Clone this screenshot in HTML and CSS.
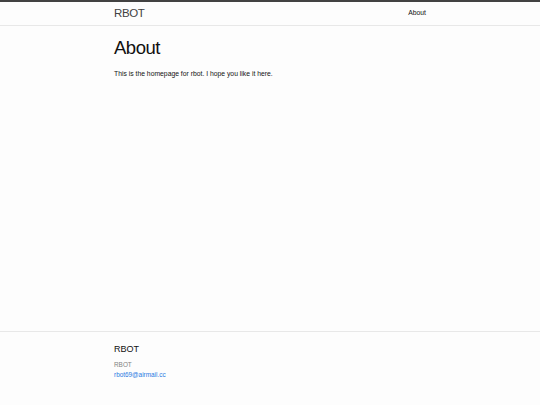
FILE: index.html
```html
<!DOCTYPE html>
<html lang="en">
<head>
<meta charset="utf-8">
<title>About | RBOT</title>
<link rel="stylesheet" href="styles.css">
</head>
<body>
<header class="site-header">
  <div class="wrapper header-row">
    <a class="site-title" href="#">RBOT</a>
    <nav class="site-nav"><a class="page-link" href="#">About</a></nav>
  </div>
</header>
<main class="page-content">
  <div class="wrapper">
    <h1 class="post-title">About</h1>
    <p class="intro">This is the homepage for rbot. I hope you like it here.</p>
  </div>
</main>
<footer class="site-footer">
  <div class="wrapper">
    <h2 class="footer-heading">RBOT</h2>
    <ul class="contact-list">
      <li class="muted">RBOT</li>
      <li><a href="#">rbot69@airmail.cc</a></li>
    </ul>
  </div>
</footer>
</body>
</html>
```

FILE: styles.css
```css
html, body {
  margin: 0;
  padding: 0;
}
body {
  background: #fdfdfd;
  color: #111;
  font-family: "Liberation Sans", Arial, Helvetica, sans-serif;
  font-size: 6.8px;
  line-height: 1.5;
  min-height: 100vh;
  display: flex;
  flex-direction: column;
}
.wrapper {
  width: 312px;
  margin: 0 auto;
}
a { text-decoration: none; }

.site-header {
  border-top: 2px solid #424242;
  border-bottom: 1px solid #e8e8e8;
}
.header-row {
  display: flex;
  justify-content: space-between;
  align-items: center;
  height: 23px;
}
.site-title {
  font-size: 11.5px;
  letter-spacing: -0.4px;
  color: #424242;
  line-height: 23px;
}
.page-link {
  color: #111;
  font-size: 6.8px;
}

.page-content {
  flex: 1;
  padding-top: 11px;
}
.post-title {
  margin: 0;
  font-size: 18.5px;
  font-weight: normal;
  letter-spacing: -0.5px;
  line-height: 1.2;
  color: #111;
}
.intro {
  margin: 10px 0 0;
}

.site-footer {
  border-top: 1px solid #e8e8e8;
  padding: 11px 0 26px;
}
.footer-heading {
  margin: 0 0 4px;
  font-size: 9px;
  font-weight: normal;
  color: #111;
}
.contact-list {
  list-style: none;
  margin: 0;
  padding: 0;
  font-size: 6.4px;
  line-height: 1.45;
}
.muted { color: #828282; }
.contact-list a { color: #2a7ae2; }
```
